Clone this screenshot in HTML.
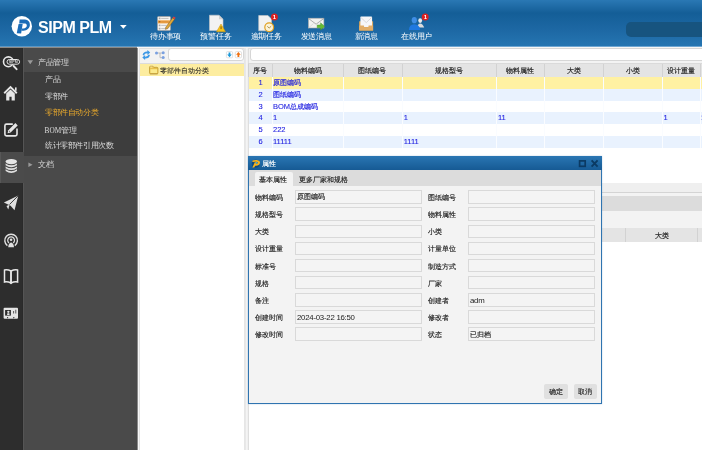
<!DOCTYPE html>
<html><head><meta charset="utf-8">
<style>
*{margin:0;padding:0;box-sizing:border-box}
html,body{width:702px;height:450px;overflow:hidden;background:#fff;font-family:"Liberation Sans",sans-serif;position:relative}
.a{position:absolute}
.t{position:absolute;white-space:nowrap;line-height:10px;height:10px}
.ht{color:#fff;font-size:8px;letter-spacing:-0.2px}
.mt{color:#dcdcdc;font-size:7.5px;letter-spacing:-0.4px}
.gt{color:#222;font-size:7.45px;-webkit-text-stroke:0.17px #222}
.gd{color:#1d1de0;font-size:7.5px;-webkit-text-stroke:0.1px #1d1de0}
.gd b{font-size:7.45px}
.gd b{font-weight:normal;-webkit-text-stroke:0.16px #1d1de0}
.lb{color:#222;font-size:7.45px;-webkit-text-stroke:0.15px #222}
.vl{color:#222;font-size:7.8px;letter-spacing:-0.24px}
.inp{position:absolute;height:13.5px;border:1px solid #d9d9d9;background:#f4f4f4}
</style></head><body>
<div style="position:absolute;left:0;top:0;width:702px;height:450px;will-change:transform;overflow:hidden">
<div class="a" style="left:0px;top:0px;width:702px;height:46px;background:linear-gradient(#2a78b4 0px,#145e97 13px,#1d68a4 30px,#2575b1 46px);"></div>
<div class="a" style="left:0px;top:46px;width:702px;height:1px;background:#6ea6d2;"></div>
<div class="a" style="left:0px;top:47px;width:702px;height:1px;background:#f8f6f4;"></div>
<div class="a" style="left:0px;top:46px;width:137px;height:1px;background:#5a96c4;"></div>
<div class="a" style="left:0px;top:47px;width:137px;height:1px;background:#8e8a86;"></div>
<svg class="a" style="left:0;top:0" width="702" height="46">
  <circle cx="21.8" cy="26.3" r="10.2" fill="#fff"/>
  <path d="M16.75 33.3 L21.1 33.5 L22.7 23.9 L18.6 23.9 Z" fill="#1a6cb8"/>
  <path d="M19.6 19.5 L25 19.6 C28.2 19.8 30 22 29.9 25.1 C29.7 28.5 26.8 30.75 23.6 30.75 L21.4 30.75 L22 28.4 L23.4 28.4 C25.4 28.4 26.8 27 26.8 25.4 C26.8 24.2 25.8 23.6 24.4 23.6 L19.2 23.6 Z" fill="#1a6cb8"/>
  <path d="M120 25 L126.7 25 L123.35 28.7 Z" fill="#fff"/>
  <!-- todo notepad -->
  <rect x="157.5" y="16.5" width="13" height="14" rx="1" fill="#f6f4f0" stroke="#a0a0a0" stroke-width="0.7"/>
  <rect x="158" y="20.3" width="12" height="3.1" fill="#f2a444"/>
  <rect x="159" y="17.8" width="1.2" height="1.2" fill="none" stroke="#999" stroke-width="0.4"/>
  <rect x="159" y="21.3" width="1.2" height="1.2" fill="none" stroke="#a06020" stroke-width="0.4"/>
  <rect x="159" y="24.8" width="1.2" height="1.2" fill="none" stroke="#999" stroke-width="0.4"/>
  <rect x="159" y="28" width="1.2" height="1.2" fill="none" stroke="#999" stroke-width="0.4"/>
  <line x1="161.2" y1="18.4" x2="168.5" y2="18.4" stroke="#9a9a9a" stroke-width="0.6"/>
  <line x1="161.2" y1="21.9" x2="168.5" y2="21.9" stroke="#c07a30" stroke-width="0.6"/>
  <line x1="161.2" y1="25.4" x2="166.5" y2="25.4" stroke="#9a9a9a" stroke-width="0.6"/>
  <line x1="161.2" y1="28.6" x2="165.5" y2="28.6" stroke="#9a9a9a" stroke-width="0.6"/>
  <path d="M165.8 27.2 L172.6 17.8 L174.6 19.2 L167.8 28.6 L165.4 29.4 Z" fill="#e0a838" stroke="#6a4a20" stroke-width="0.45"/>
  <path d="M172.6 17.8 L173.6 16.4 L175.6 17.8 L174.6 19.2 Z" fill="#e03a3a"/>
  <!-- warning doc -->
  <path d="M209.5 15.2 L219 15.2 L223 19.2 L223 30.5 L209.5 30.5 Z" fill="#f2f2f2" stroke="#c8c8c8" stroke-width="0.6"/>
  <path d="M219 15.2 L219 19.2 L223 19.2 Z" fill="#d0d0d0"/>
  <path d="M221 24 L225.5 31.8 L216.5 31.8 Z" fill="#f6c21c" stroke="#c89010" stroke-width="0.5"/>
  <rect x="220.6" y="26.3" width="0.9" height="2.8" fill="#6a5010"/>
  <!-- overdue doc -->
  <path d="M258.7 15.5 L268 15.5 L271.5 19 L271.5 30.8 L258.7 30.8 Z" fill="#f2f2f2" stroke="#c8c8c8" stroke-width="0.6"/>
  <circle cx="269.2" cy="27.3" r="4.4" fill="#fbf3d8" stroke="#e0a020" stroke-width="1.2"/>
  <path d="M267.3 26.4 L269.2 28 L271.2 26.2" fill="none" stroke="#8a6a20" stroke-width="0.7"/>
  <circle cx="274.4" cy="17.1" r="3.5" fill="#dc2020"/>
  <text x="274.5" y="19.4" font-size="6" font-weight="bold" fill="#fff" text-anchor="middle" font-family="Liberation Sans">1</text>
  <!-- send msg -->
  <rect x="308.4" y="18.2" width="15.5" height="9.8" fill="#f2f2f0" stroke="#a8a8a8" stroke-width="0.6"/>
  <path d="M308.4 18.4 L316.1 24.2 L323.9 18.4" fill="none" stroke="#909090" stroke-width="0.7"/>
  <path d="M308.4 28 L313.5 23.5 M323.9 28 L318.7 23.5" fill="none" stroke="#c8c8c8" stroke-width="0.5"/>
  <path d="M317.2 25 L320.6 25 L320.6 22.8 L324.7 26.4 L320.6 30 L320.6 27.8 L317.2 27.8 Z" fill="#66bb33" stroke="#3a9020" stroke-width="0.4"/>
  <!-- new msg -->
  <path d="M359.1 21.3 L373.1 21.3 L373.1 30.6 L359.1 30.6 Z" fill="#d8a458"/>
  <rect x="360.4" y="16.6" width="11.7" height="10.4" rx="0.8" fill="#f6f7f9"/>
  <path d="M360.8 17.4 L366.25 22.6 L371.7 17.4" fill="none" stroke="#c4c4c4" stroke-width="0.6"/>
  <path d="M359.1 25.6 L363.9 25.6 L364.2 27.3 L368.3 27.3 L368.6 25.6 L373.1 25.6 L373.1 30.6 L359.1 30.6 Z" fill="#e2ae68"/>
  <!-- online users -->
  <ellipse cx="420.2" cy="20.6" rx="1.9" ry="2.3" fill="#ececec"/>
  <path d="M417.2 27.6 Q417.6 23.6 420.2 23.4 Q422.9 23.6 424.2 27.6 Z" fill="#dcdcdc"/>
  <ellipse cx="414.3" cy="20.2" rx="2.6" ry="3.1" fill="#3f8ee6"/>
  <path d="M408.9 29.9 Q409.1 24.6 414.3 24.3 Q419.6 24.6 420.2 29.9 Z" fill="#1f78e0"/>
  <circle cx="425.2" cy="16.9" r="3.5" fill="#dc2020"/>
  <text x="425.3" y="19.2" font-size="6" font-weight="bold" fill="#fff" text-anchor="middle" font-family="Liberation Sans">1</text>
</svg>
<div class="t " style="left:38px;top:18.6px;height:18px;line-height:18px;color:#fff;font-weight:bold;font-size:16px;letter-spacing:-0.45px">SIPM PLM</div>
<div class="a" style="left:626px;top:22px;width:90px;height:15px;background:#17547f;border-radius:5px"></div>
<div class="t ht" style="left:150px;top:31.7px;">待办事项</div>
<div class="t ht" style="left:200.3px;top:31.7px;">预警任务</div>
<div class="t ht" style="left:250.7px;top:31.7px;">逾期任务</div>
<div class="t ht" style="left:300.7px;top:31.7px;">发送消息</div>
<div class="t ht" style="left:354.7px;top:31.7px;">新消息</div>
<div class="t ht" style="left:401px;top:31.7px;">在线用户</div>
<div class="a" style="left:0px;top:48px;width:23px;height:402px;background:#2d2d2d;"></div>
<div class="a" style="left:22px;top:48px;width:1px;height:402px;background:#2a2a2a;"></div>
<div class="a" style="left:0px;top:151.5px;width:23px;height:31px;background:#4b4b4b;"></div>
<div class="a" style="left:0px;top:151.5px;width:1px;height:31px;background:#575757;"></div>
<svg class="a" style="left:0;top:0" width="23" height="450">
  <circle cx="8.4" cy="61.8" r="4.9" fill="none" stroke="#e6e6e6" stroke-width="1.6"/>
  <line x1="13.6" y1="66" x2="16.6" y2="69.2" stroke="#e6e6e6" stroke-width="1.9" stroke-linecap="round"/>
  <rect x="7" y="59.5" width="12.6" height="4.7" rx="2.35" fill="#2b2b2b" stroke="#e6e6e6" stroke-width="1"/>
  <text x="13.3" y="63.3" font-size="3.4" font-weight="bold" fill="#dcdcdc" text-anchor="middle" font-family="Liberation Sans" textLength="9" lengthAdjust="spacingAndGlyphs">SIPM</text>
  <path d="M4.2 93.2 L10.5 87 L16.8 93.2" fill="none" stroke="#e6e6e6" stroke-width="1.9"/>
  <path d="M6.2 93.6 L10.5 89.6 L14.8 93.6 L14.8 100.6 L11.6 100.6 L11.6 96.8 L9.4 96.8 L9.4 100.6 L6.2 100.6 Z" fill="#e6e6e6"/>
  <rect x="15" y="87.4" width="1.6" height="3.4" fill="#e6e6e6"/>
  <path d="M12.8 124.1 L6.5 124.1 Q4.9 124.1 4.9 125.7 L4.9 134.3 Q4.9 135.9 6.5 135.9 L15.4 135.9 Q17 135.9 17 134.3 L17 128.6" fill="none" stroke="#e6e6e6" stroke-width="1.6"/>
  <path d="M7.6 133.2 L8.3 130.2 L15.4 123.1 L17.7 125.4 L10.6 132.5 Z" fill="#e6e6e6"/>
  <path d="M8.9 131.8 L9.3 130.6 L10.1 131.4 Z" fill="#2b2b2b"/>
  <ellipse cx="11.3" cy="161.6" rx="5.7" ry="2.7" fill="#e6e6e6"/>
  <path d="M5.6 163.4 Q11.3 167.2 17 163.4 L17 165.3 Q11.3 169.1 5.6 165.3 Z" fill="#e0e0e0"/>
  <path d="M5.6 166.4 Q11.3 170.2 17 166.4 L17 168.2 Q11.3 172 5.6 168.2 Z" fill="#e0e0e0"/>
  <path d="M5.6 169.3 Q11.3 173.1 17 169.3 L17 171 Q11.3 174.8 5.6 171 Z" fill="#e0e0e0"/>
  <path d="M3.9 202.5 L18.3 195.6 L14.5 210.3 L10.6 205.8 Z" fill="#e0e0e0"/>
  <path d="M18.3 195.6 L9.5 204.5" stroke="#2b2b2b" stroke-width="0.9"/>
  <path d="M6.5 206 L9.5 204.8 L8.3 209.5 Z" fill="#e0e0e0"/>
  <path d="M7.4 245.6 A6.3 6.3 0 1 1 14.8 245.6" fill="none" stroke="#e0e0e0" stroke-width="1.4"/>
  <path d="M9 243 A3.4 3.4 0 1 1 13.2 243" fill="none" stroke="#e0e0e0" stroke-width="1.2"/>
  <circle cx="11.1" cy="239.7" r="1.3" fill="#e0e0e0"/>
  <path d="M8.2 247.3 Q8.5 243 11.1 242.6 Q13.7 243 14 247.3 Z" fill="#e0e0e0"/>
  <path d="M4.5 270 Q7.5 269.3 11 271 L11 283 Q7.5 281.3 4.5 282 Z" fill="none" stroke="#e8e8e8" stroke-width="1.5"/>
  <path d="M17.6 270 Q14.5 269.3 11 271 L11 283 Q14.5 281.3 17.6 282 Z" fill="none" stroke="#e8e8e8" stroke-width="1.5"/>
  <rect x="3.6" y="307.8" width="14.4" height="10.9" rx="1" fill="#e4e4e4"/>
  <rect x="5.1" y="310" width="5.8" height="5.6" fill="#2b2b2b"/>
  <ellipse cx="8.35" cy="311.8" rx="1.2" ry="1.1" fill="#e4e4e4"/>
  <path d="M7.1 315 L7.3 313.2 L9.4 313.2 L9.6 315 Z" fill="#e4e4e4"/>
  <path d="M13 313.6 L13 311 L14.1 311 L14.1 313.6 Z" fill="#666"/>
  <path d="M15.2 313.6 L15.2 309.8 L16.3 309.8 L16.3 313.6 Z" fill="#666"/>
  <path d="M6.9 317.1 L8.3 317.1 L7.6 318.8 Z" fill="#2b2b2b"/>
  <path d="M13.1 317.1 L14.5 317.1 L13.8 318.8 Z" fill="#2b2b2b"/>
</svg>
<div class="a" style="left:23px;top:48px;width:114px;height:402px;background:#4a4a4a;"></div>
<div class="a" style="left:23px;top:72px;width:114px;height:83.6px;background:#3d3d3d;"></div>
<div class="a" style="left:23px;top:48px;width:1px;height:103.5px;background:#555;"></div>
<div class="a" style="left:23px;top:182.5px;width:1px;height:267.5px;background:#555;"></div>
<div class="a" style="left:23px;top:151.5px;width:1px;height:31px;background:#4b4b4b;"></div>
<svg class="a" style="left:23px;top:48px" width="114" height="130">
  <path d="M4.5 12.3 L10 12.3 L7.25 16.2 Z" fill="#9a9a9a"/>
  <path d="M5.4 114.4 L9.6 116.7 L5.4 119 Z" fill="#9a9a9a"/>
</svg>
<div class="t mt" style="left:38px;top:57.5px;">产品管理</div>
<div class="t mt" style="left:45px;top:75px;">产品</div>
<div class="t mt" style="left:45px;top:91.7px;">零部件</div>
<div class="t mt" style="left:45px;top:108px;color:#e9a92c">零部件自动分类</div>
<div class="t mt" style="left:44.6px;top:125.6px;"><span style="font-family:'Liberation Serif',serif;font-size:7.3px;letter-spacing:0">BOM</span>管理</div>
<div class="t mt" style="left:45px;top:141.3px;">统计零部件引用次数</div>
<div class="t mt" style="left:38px;top:160px;">文档</div>
<div class="a" style="left:137px;top:48px;width:1px;height:402px;background:#8a8a8a;"></div>
<div class="a" style="left:138px;top:48px;width:1px;height:402px;background:#f8f8f8;"></div>
<div class="a" style="left:139px;top:48px;width:1px;height:402px;background:#e4e4e4;"></div>
<div class="a" style="left:140px;top:48px;width:104px;height:402px;background:#fff;"></div>
<div class="a" style="left:140px;top:48px;width:104px;height:15px;background:#f3f3f3;"></div>
<div class="a" style="left:140px;top:63px;width:104px;height:1px;background:#dcdcdc;"></div>
<div class="a" style="left:140px;top:48px;width:104px;height:1px;background:#dedede;"></div>
<div class="a" style="left:167.7px;top:48px;width:76.5px;height:13px;background:#fff;border:1px solid #d6d6d6;border-radius:3px"></div>
<div class="a" style="left:140px;top:64px;width:104px;height:12px;background:#fdeda0;"></div>
<div class="t lb" style="left:160px;top:65.8px;-webkit-text-stroke:0.06px #222">零部件自动分类</div>
<svg class="a" style="left:137px;top:45px" width="110" height="35">
  <path d="M5.6 10 Q6.2 6.4 10.4 6.5 L10.4 4.9 L13.2 7.4 L10.4 9.9 L10.4 8.3 Q7.6 8.2 6.9 10.4 Z" fill="#3c98e6"/>
  <path d="M12.9 10 Q12.3 13.6 8.1 13.5 L8.1 15.1 L5.3 12.6 L8.1 10.1 L8.1 11.7 Q10.9 11.8 11.6 9.6 Z" fill="#3c98e6"/>
  <path d="M19.6 8 L23 8 L23 12.7 L25.6 12.7 M23 8 L25.6 8" fill="none" stroke="#a8a8a8" stroke-width="0.7"/>
  <circle cx="19.5" cy="8" r="1.5" fill="#7aa0e0"/>
  <circle cx="26.2" cy="7.7" r="1.5" fill="#7aa0e0"/>
  <circle cx="26.2" cy="12.6" r="1.5" fill="#7aa0e0"/>
  <path d="M12.5 22.3 Q12.5 21.2 13.6 21.2 L15.9 21.2 L16.9 22.3 L19.9 22.3 Q21 22.3 21 23.3 L21 27.8 Q21 28.8 20 28.8 L13.5 28.8 Q12.5 28.8 12.5 27.8 Z" fill="#e8c04c" stroke="#b08a24" stroke-width="0.6"/>
  <path d="M13.4 24.2 L20.2 24.2 L20.2 28 L13.4 28 Z" fill="#fbea8c"/>
  <path d="M13.3 22.1 L15.5 22.1" stroke="#fff4c0" stroke-width="0.8"/>
  <path d="M12.8 29.1 L20.8 29.1" stroke="#9a7a30" stroke-width="0.6" opacity="0.6"/>
  <rect x="89.4" y="6.6" width="6.2" height="6.2" rx="1" fill="#fff" stroke="#d4d4d4" stroke-width="0.7"/>
  <path d="M92.5 12.3 L90.2 9.6 L91.6 9.6 L91.6 7.4 L93.4 7.4 L93.4 9.6 L94.8 9.6 Z" fill="#1a98d8"/>
  <rect x="98.3" y="6.6" width="6.2" height="6.2" rx="1" fill="#fff" stroke="#d4d4d4" stroke-width="0.7"/>
  <path d="M101.4 7.1 L99.1 9.8 L100.5 9.8 L100.5 12 L102.3 12 L102.3 9.8 L103.7 9.8 Z" fill="#f07010"/>
</svg>
<div class="a" style="left:244px;top:48px;width:1px;height:402px;background:#e6e6e6;"></div>
<div class="a" style="left:245px;top:48px;width:1px;height:402px;background:#e8e8e8;"></div>
<div class="a" style="left:246px;top:48px;width:1px;height:402px;background:#f4f4f4;"></div>
<div class="a" style="left:247px;top:48px;width:1px;height:402px;background:#f0f0f0;"></div>
<div class="a" style="left:248px;top:48px;width:1px;height:402px;background:#dedede;"></div>
<div class="a" style="left:249px;top:48px;width:453px;height:402px;background:#fff;"></div>
<div class="a" style="left:249px;top:48px;width:453px;height:15px;background:#f3f3f3;"></div>
<div class="a" style="left:249px;top:48px;width:453px;height:1px;background:#dedede;"></div>
<div class="a" style="left:249.5px;top:48px;width:460px;height:13px;background:#fff;border:1px solid #d6d6d6;border-radius:3px"></div>
<div class="a" style="left:248px;top:63px;width:454px;height:14px;background:#e4e4e4;border-left:1px solid #d0d0d0;border-top:1px solid #dadada"></div>
<div class="a" style="left:249px;top:77.0px;width:453px;height:11.75px;background:#fff1a2;"></div>
<div class="a" style="left:249px;top:88.75px;width:453px;height:11.75px;background:#e9f2fe;"></div>
<div class="a" style="left:249px;top:100.5px;width:453px;height:11.75px;background:#fff;"></div>
<div class="a" style="left:249px;top:112.25px;width:453px;height:11.75px;background:#e9f2fe;"></div>
<div class="a" style="left:249px;top:124.0px;width:453px;height:11.75px;background:#fff;"></div>
<div class="a" style="left:249px;top:135.75px;width:453px;height:11.75px;background:#e9f2fe;"></div>
<div class="a" style="left:271.7px;top:64px;width:1px;height:13px;background:#d2d2d2;"></div>
<div class="a" style="left:271.7px;top:77px;width:1px;height:70.5px;background:#fafcff;"></div>
<div class="a" style="left:342.6px;top:64px;width:1px;height:13px;background:#d2d2d2;"></div>
<div class="a" style="left:342.6px;top:77px;width:1px;height:70.5px;background:#fafcff;"></div>
<div class="a" style="left:401.9px;top:64px;width:1px;height:13px;background:#d2d2d2;"></div>
<div class="a" style="left:401.9px;top:77px;width:1px;height:70.5px;background:#fafcff;"></div>
<div class="a" style="left:496.2px;top:64px;width:1px;height:13px;background:#d2d2d2;"></div>
<div class="a" style="left:496.2px;top:77px;width:1px;height:70.5px;background:#fafcff;"></div>
<div class="a" style="left:543.9px;top:64px;width:1px;height:13px;background:#d2d2d2;"></div>
<div class="a" style="left:543.9px;top:77px;width:1px;height:70.5px;background:#fafcff;"></div>
<div class="a" style="left:602.9px;top:64px;width:1px;height:13px;background:#d2d2d2;"></div>
<div class="a" style="left:602.9px;top:77px;width:1px;height:70.5px;background:#fafcff;"></div>
<div class="a" style="left:662.2px;top:64px;width:1px;height:13px;background:#d2d2d2;"></div>
<div class="a" style="left:662.2px;top:77px;width:1px;height:70.5px;background:#fafcff;"></div>
<div class="a" style="left:700.2px;top:64px;width:1px;height:13px;background:#d2d2d2;"></div>
<div class="a" style="left:700.2px;top:77px;width:1px;height:70.5px;background:#fafcff;"></div>
<div class="t gt" style="left:200.2px;top:65.5px;width:120px;text-align:center">序号</div>
<div class="t gt" style="left:247.5px;top:65.5px;width:120px;text-align:center">物料编码</div>
<div class="t gt" style="left:312.4px;top:65.5px;width:120px;text-align:center">图纸编号</div>
<div class="t gt" style="left:389.2px;top:65.5px;width:120px;text-align:center">规格型号</div>
<div class="t gt" style="left:460.2px;top:65.5px;width:120px;text-align:center">物料属性</div>
<div class="t gt" style="left:513.5px;top:65.5px;width:120px;text-align:center">大类</div>
<div class="t gt" style="left:572.7px;top:65.5px;width:120px;text-align:center">小类</div>
<div class="t gt" style="left:621.3px;top:65.5px;width:120px;text-align:center">设计重量</div>
<div class="t gd" style="left:250px;top:78.0px;width:21px;text-align:center">1</div>
<div class="t gd" style="left:273px;top:78.0px;"><b>原图编码</b></div>
<div class="t gd" style="left:250px;top:89.75px;width:21px;text-align:center">2</div>
<div class="t gd" style="left:273px;top:89.75px;"><b>图纸编码</b></div>
<div class="t gd" style="left:250px;top:101.5px;width:21px;text-align:center">3</div>
<div class="t gd" style="left:273px;top:101.5px;">BOM<b>总成编码</b></div>
<div class="t gd" style="left:250px;top:113.25px;width:21px;text-align:center">4</div>
<div class="t gd" style="left:273px;top:113.25px;">1</div>
<div class="t gd" style="left:403.7px;top:113.25px;">1</div>
<div class="t gd" style="left:498px;top:113.25px;">11</div>
<div class="t gd" style="left:663.4px;top:113.25px;">1</div>
<div class="t gd" style="left:701px;top:113.25px;">1</div>
<div class="t gd" style="left:250px;top:125.0px;width:21px;text-align:center">5</div>
<div class="t gd" style="left:273px;top:125.0px;">222</div>
<div class="t gd" style="left:250px;top:136.75px;width:21px;text-align:center">6</div>
<div class="t gd" style="left:273px;top:136.75px;">11111</div>
<div class="t gd" style="left:403.7px;top:136.75px;">1111</div>
<div class="a" style="left:249px;top:183.3px;width:453px;height:8.7px;background:#efefef;"></div>
<div class="a" style="left:249px;top:192px;width:453px;height:1px;background:#d4d4d4;"></div>
<div class="a" style="left:249px;top:193px;width:453px;height:3px;background:#f3f3f3;"></div>
<div class="a" style="left:249px;top:196px;width:453px;height:15px;background:#dcdcdc;"></div>
<div class="a" style="left:249px;top:211px;width:453px;height:17.3px;background:#f3f3f3;"></div>
<div class="a" style="left:249px;top:228.3px;width:453px;height:13.5px;background:#e4e4e4;"></div>
<div class="a" style="left:625.3px;top:228.3px;width:1px;height:13.5px;background:#d2d2d2;"></div>
<div class="a" style="left:696.5px;top:228.3px;width:1px;height:13.5px;background:#d2d2d2;"></div>
<div class="t gt" style="left:601.7px;top:230.5px;width:120px;text-align:center">大类</div>
<div class="a" style="left:248px;top:156px;width:354px;height:248px;background:#f3f3f3;border:1px solid #2f74b0;box-shadow:0 0 1.5px rgba(47,116,176,0.35)"></div>
<div class="a" style="left:248px;top:156px;width:354px;height:14px;background:linear-gradient(#2a76b3,#165a94);"></div>
<div class="a" style="left:249px;top:170px;width:352px;height:16px;background:#dcdcdc;"></div>
<div class="a" style="left:254.8px;top:171.7px;width:38px;height:14.3px;background:#f3f3f3;border-radius:2px 2px 0 0"></div>
<div class="t " style="left:262.3px;top:159px;color:#fff;font-size:7.45px;-webkit-text-stroke:0.15px #fff">属性</div>
<div class="t lb" style="left:259.3px;top:174.5px;">基本属性</div>
<div class="t lb" style="left:299.3px;top:174.5px;">更多厂家和规格</div>
<div class="inp" style="left:295px;top:190.20px;width:127px"></div>
<div class="inp" style="left:468.2px;top:190.20px;width:127px"></div>
<div class="t lb" style="left:255px;top:193.0px;">物料编码</div>
<div class="t lb" style="left:427.8px;top:193.0px;">图纸编号</div>
<div class="inp" style="left:295px;top:207.35px;width:127px"></div>
<div class="inp" style="left:468.2px;top:207.35px;width:127px"></div>
<div class="t lb" style="left:255px;top:210.15px;">规格型号</div>
<div class="t lb" style="left:427.8px;top:210.15px;">物料属性</div>
<div class="inp" style="left:295px;top:224.50px;width:127px"></div>
<div class="inp" style="left:468.2px;top:224.50px;width:127px"></div>
<div class="t lb" style="left:255px;top:227.3px;">大类</div>
<div class="t lb" style="left:427.8px;top:227.3px;">小类</div>
<div class="inp" style="left:295px;top:241.65px;width:127px"></div>
<div class="inp" style="left:468.2px;top:241.65px;width:127px"></div>
<div class="t lb" style="left:255px;top:244.45px;">设计重量</div>
<div class="t lb" style="left:427.8px;top:244.45px;">计量单位</div>
<div class="inp" style="left:295px;top:258.80px;width:127px"></div>
<div class="inp" style="left:468.2px;top:258.80px;width:127px"></div>
<div class="t lb" style="left:255px;top:261.6px;">标准号</div>
<div class="t lb" style="left:427.8px;top:261.6px;">制造方式</div>
<div class="inp" style="left:295px;top:275.95px;width:127px"></div>
<div class="inp" style="left:468.2px;top:275.95px;width:127px"></div>
<div class="t lb" style="left:255px;top:278.75px;">规格</div>
<div class="t lb" style="left:427.8px;top:278.75px;">厂家</div>
<div class="inp" style="left:295px;top:293.10px;width:127px"></div>
<div class="inp" style="left:468.2px;top:293.10px;width:127px"></div>
<div class="t lb" style="left:255px;top:295.9px;">备注</div>
<div class="t lb" style="left:427.8px;top:295.9px;">创建者</div>
<div class="inp" style="left:295px;top:310.25px;width:127px"></div>
<div class="inp" style="left:468.2px;top:310.25px;width:127px"></div>
<div class="t lb" style="left:255px;top:313.05px;">创建时间</div>
<div class="t lb" style="left:427.8px;top:313.05px;">修改者</div>
<div class="inp" style="left:295px;top:327.40px;width:127px"></div>
<div class="inp" style="left:468.2px;top:327.40px;width:127px"></div>
<div class="t lb" style="left:255px;top:330.2px;">修改时间</div>
<div class="t lb" style="left:427.8px;top:330.2px;">状态</div>
<div class="t lb" style="left:297px;top:192.4px;">原图编码</div>
<div class="t vl" style="left:297px;top:312.75px;">2024-03-22 16:50</div>
<div class="t vl" style="left:470px;top:295.6px;">adm</div>
<div class="t lb" style="left:470px;top:329.6px;">已归档</div>
<div class="a" style="left:544.3px;top:383.7px;width:23.7px;height:15px;background:#e0e0e0;border-radius:2px"></div>
<div class="a" style="left:573.6px;top:383.7px;width:23.3px;height:15px;background:#e0e0e0;border-radius:2px"></div>
<div class="t lb" style="left:548.8px;top:387px;">确定</div>
<div class="t lb" style="left:578px;top:387px;">取消</div>
<svg class="a" style="left:248px;top:156px" width="354" height="14">
  <circle cx="7.7" cy="7.8" r="4" fill="#0e4a80"/>
  <path d="M4.6 4.6 Q6 3.8 8.8 4 Q12.4 4.6 12 7 Q11.4 9.6 8.1 9.8 L7.2 9.8 L6.2 11.5 L4.4 11.5 L6.8 6.2 L8.6 6.2 L7.8 8 Q9.8 7.9 9.8 6.8 Q9.7 5.6 7.8 5.7 L4.3 5.9 Z" fill="#f7b21c"/>
  <circle cx="8.6" cy="6.9" r="0.9" fill="#3ab0e0"/>
  <rect x="331.6" y="4.9" width="5.6" height="5.4" fill="none" stroke="#0b3a63" stroke-width="1.7"/>
  <path d="M343.6 4.4 L349.6 10.7 M349.6 4.4 L343.6 10.7" stroke="#0b3a63" stroke-width="1.9"/>
</svg>
</div></body></html>
